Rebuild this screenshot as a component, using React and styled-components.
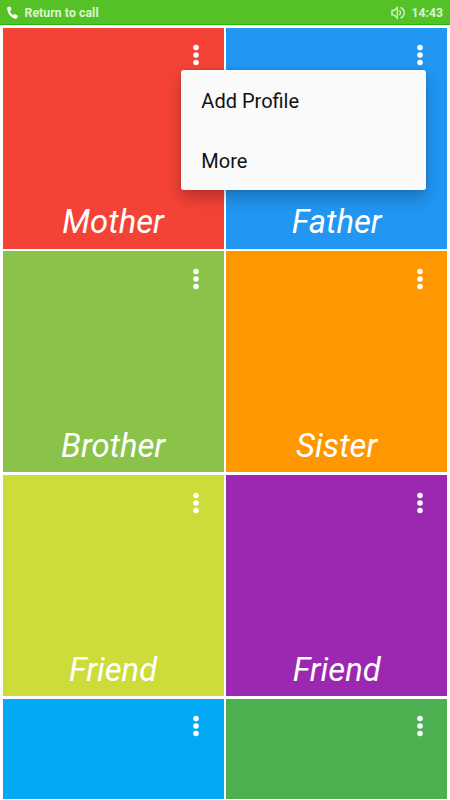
import React from 'react';
import styled, { createGlobalStyle } from 'styled-components';

const GlobalStyle = createGlobalStyle`
  * {
    box-sizing: border-box;
  }
  body {
    margin: 0;
    background: #fff;
    font-family: Roboto, sans-serif;
  }
`;

const Screen = styled.div`
  display: flex;
  flex-direction: column;
  width: 450px;
  height: 800px;
  overflow: hidden;
  background: #fff;
`;

const StatusBar = styled.header`
  display: flex;
  align-items: center;
  flex: none;
  height: 25px;
  padding: 1px 7px 0 6px;
  background: #54c226;
  border-bottom: 1px solid #24b70c;
  color: #dbf5d0;
  font-size: 12.2px;
  font-weight: 700;
  line-height: 14px;
`;

const CallText = styled.span`
  flex: 1;
  margin-left: 6px;
  letter-spacing: 0.1px;
`;

const Clock = styled.span`
  margin-left: 6px;
`;

const Grid = styled.main`
  flex: 1;
  min-height: 0;
  display: grid;
  grid-template-columns: 221.2px 221.2px;
  grid-template-rows: 221px 221px 221px 100px;
  gap: 2.8px 2.4px;
  padding: 2.6px 2.5px 1px;
`;

const Card = styled.section`
  position: relative;
  display: flex;
  flex-direction: column;
  align-items: center;
  justify-content: space-between;
  min-height: 0;
  overflow: ${props => (props.$open ? 'visible' : 'hidden')};
  background: ${props => props.$color};
`;

const MoreButton = styled.button`
  display: flex;
  align-self: flex-end;
  margin: 15.4px 21.6px 0 0;
  padding: 0;
  border: 0;
  background: none;
`;

const Name = styled.h2`
  margin: 0 0 6.5px;
  color: #fff;
  font-size: 32.8px;
  font-style: italic;
  font-weight: 400;
  line-height: 39px;
`;

const Menu = styled.ul`
  position: absolute;
  top: 42.4px;
  right: 21px;
  z-index: 1;
  width: 245.3px;
  margin: 0;
  padding: 0;
  list-style: none;
  background: #fafafa;
  border-radius: 2.5px;
  box-shadow: 0 8px 16px rgba(0, 0, 0, 0.24), 0 0 3px rgba(0, 0, 0, 0.16);
`;

const MenuItem = styled.li`
  display: flex;
  align-items: center;
  height: 60px;
  padding: 2px 20px 0 20.4px;
  color: #111;
  font-size: 20px;
`;

const cards = [
  { id: 1, name: 'Mother', color: '#f44336' },
  { id: 2, name: 'Father', color: '#2196f3', open: true },
  { id: 3, name: 'Brother', color: '#8bc34a' },
  { id: 4, name: 'Sister', color: '#ff9800' },
  { id: 5, name: 'Friend', color: '#cddc39' },
  { id: 6, name: 'Friend', color: '#9c27b0' },
  { id: 7, color: '#03a9f4' },
  { id: 8, color: '#4caf50' },
];

function PhoneIcon() {
  return (
    <svg width="12.5" height="13.5" viewBox="0 0 12 13">
      <path
        d="M3.6.5 1.8 1C1.3 1.2 1 1.8 1.1 2.6c.6 4.9 3.7 8.7 8 9.6.7.1 1.3-.1 1.5-.7l.7-1.5c.1-.4 0-.7-.3-.9L8.7 7.7c-.3-.2-.6-.1-.9.2l-.9 1C5.3 8 4.2 6.5 3.7 4.9l1.1-.9c.3-.2.4-.5.3-.8L4.4 1C4.3.6 4 .4 3.6.5Z"
        fill="#fff"
      />
    </svg>
  );
}

function SpeakerIcon() {
  return (
    <svg width="15" height="14" viewBox="0 0 15 14" fill="none" stroke="#d4f2c6" strokeWidth="1.4">
      <path d="M1 4.5h2.2L6.3 1.5v10.6L3.2 9.1H1Z" />
      <path d="M8.3 4.3c1.6 1.3 1.6 3.7 0 5M9.5 1.5c5 2 5 8.6 0 10.6" />
    </svg>
  );
}

function DotsIcon() {
  return (
    <svg width="12" height="24" viewBox="0 0 12 24" fill="#fff">
      <circle cx="6" cy="4.5" r="2.8" />
      <circle cx="6" cy="12" r="2.8" />
      <circle cx="6" cy="19.5" r="2.8" />
    </svg>
  );
}

function ProfileCard(props) {
  return (
    <Card $color={props.color} $open={props.open}>
      <MoreButton type="button" aria-label="Options">
        <DotsIcon />
      </MoreButton>
      {props.name && <Name>{props.name}</Name>}
      {props.open &&
        <Menu>
          <MenuItem>Add Profile</MenuItem>
          <MenuItem>More</MenuItem>
        </Menu>
      }
    </Card>
  )
}

function App() {
  return (
    <Screen>
      <GlobalStyle />
      <StatusBar>
        <PhoneIcon />
        <CallText>Return to call</CallText>
        <SpeakerIcon />
        <Clock>14:43</Clock>
      </StatusBar>
      <Grid>
        {cards.map(card =>
          <ProfileCard key={card.id} name={card.name} color={card.color} open={card.open} />
        )}
      </Grid>
    </Screen>
  )
}

export default App;
